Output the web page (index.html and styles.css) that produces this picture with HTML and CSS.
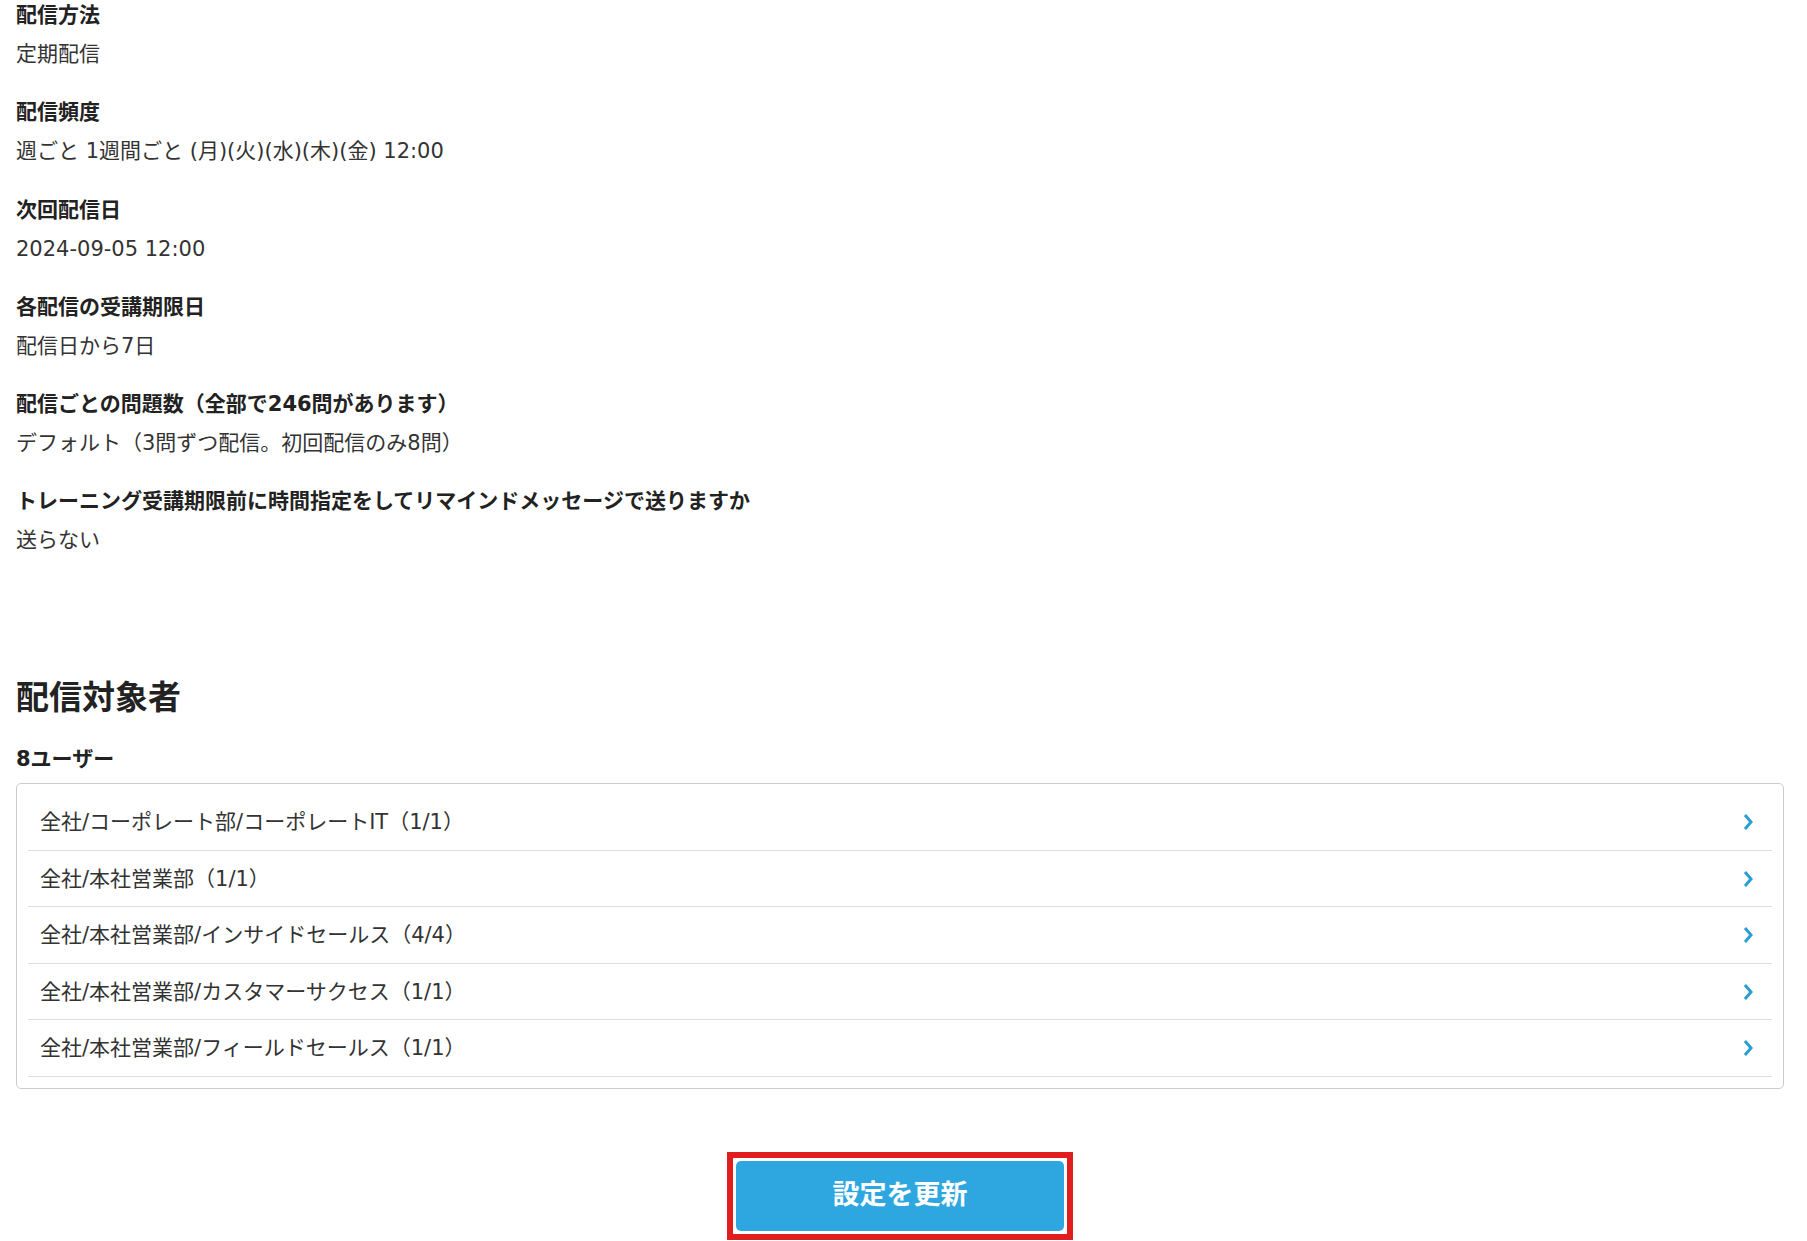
FILE: index.html
```html
<!DOCTYPE html>
<html lang="ja">
<head>
    <meta charset="UTF-8">
    <meta name="viewport" content="width=device-width, initial-scale=1.0">
    <title>配信設定</title>
    <link rel="stylesheet" href="styles.css">
</head>
<body>
    <div class="page">
        <!-- 配信設定 -->
        <dl class="settings">
            <div class="setting">
                <dt>配信方法</dt>
                <dd>定期配信</dd>
            </div>
            <div class="setting">
                <dt>配信頻度</dt>
                <dd>週ごと 1週間ごと (月)(火)(水)(木)(金) 12:00</dd>
            </div>
            <div class="setting">
                <dt>次回配信日</dt>
                <dd>2024-09-05 12:00</dd>
            </div>
            <div class="setting">
                <dt>各配信の受講期限日</dt>
                <dd>配信日から7日</dd>
            </div>
            <div class="setting">
                <dt>配信ごとの問題数（全部で246問があります）</dt>
                <dd>デフォルト（3問ずつ配信。初回配信のみ8問）</dd>
            </div>
            <div class="setting">
                <dt>トレーニング受講期限前に時間指定をしてリマインドメッセージで送りますか</dt>
                <dd>送らない</dd>
            </div>
        </dl>

        <!-- 配信対象者 -->
        <section class="targets">
            <h2>配信対象者</h2>
            <p class="count">8ユーザー</p>
            <ul class="group-list">
                <li class="group-item">
                    <span>全社/コーポレート部/コーポレートIT（1/1）</span>
                    <svg class="chevron" viewBox="0 0 10 18" width="10" height="18"><path d="M2 2 L8 9 L2 16"/></svg>
                </li>
                <li class="group-item">
                    <span>全社/本社営業部（1/1）</span>
                    <svg class="chevron" viewBox="0 0 10 18" width="10" height="18"><path d="M2 2 L8 9 L2 16"/></svg>
                </li>
                <li class="group-item">
                    <span>全社/本社営業部/インサイドセールス（4/4）</span>
                    <svg class="chevron" viewBox="0 0 10 18" width="10" height="18"><path d="M2 2 L8 9 L2 16"/></svg>
                </li>
                <li class="group-item">
                    <span>全社/本社営業部/カスタマーサクセス（1/1）</span>
                    <svg class="chevron" viewBox="0 0 10 18" width="10" height="18"><path d="M2 2 L8 9 L2 16"/></svg>
                </li>
                <li class="group-item">
                    <span>全社/本社営業部/フィールドセールス（1/1）</span>
                    <svg class="chevron" viewBox="0 0 10 18" width="10" height="18"><path d="M2 2 L8 9 L2 16"/></svg>
                </li>
            </ul>
        </section>

        <div class="actions">
            <div class="highlight">
                <button class="update-button">設定を更新</button>
            </div>
        </div>
    </div>
</body>
</html>
```

FILE: styles.css
```css
/* 全体 */
* {
    margin: 0;
    padding: 0;
    box-sizing: border-box;
}

body {
    font-family: "DejaVu Sans", "Noto Sans CJK JP", sans-serif;
    font-size: 21px;
    color: #333;
    background-color: #fff;
}

.page {
    padding: 1px 23px 0 16px;
}

/* 設定一覧 */
.setting + .setting {
    margin-top: 30.3px;
}

.setting dt {
    font-weight: bold;
    color: #222;
    line-height: 28px;
}

.setting dd {
    margin-top: 11px;
    line-height: 28px;
}

/* 配信対象者 */
.targets h2 {
    margin-top: 123.5px;
    font-size: 33px;
    line-height: 40px;
    color: #222;
}

.targets .count {
    margin-top: 27px;
    font-weight: bold;
    color: #222;
    line-height: 28px;
}

.group-list {
    list-style: none;
    margin-top: 10.5px;
    border: 1px solid #ccc;
    border-radius: 5px;
    padding: 10px 11px 11px;
}

.group-item {
    display: flex;
    align-items: center;
    justify-content: space-between;
    height: 56.5px;
    padding: 0 19px 0 12px;
    border-bottom: 1px solid #ddd;
    line-height: 28px;
}

.chevron {
    fill: none;
    stroke: #2a9fd6;
    stroke-width: 3;
}

/* 更新ボタン */
.actions {
    display: flex;
    justify-content: center;
    margin-top: 63px;
}

.highlight {
    border: 6px solid #e21d1d;
    padding: 3px;
}

.update-button {
    display: block;
    width: 328px;
    height: 70px;
    padding-bottom: 6px;
    border: none;
    border-radius: 5px;
    background-color: #2ea7e0;
    color: #fff;
    font-family: "DejaVu Sans", "Noto Sans CJK JP", sans-serif;
    font-size: 27px;
    font-weight: bold;
    cursor: pointer;
}
```
